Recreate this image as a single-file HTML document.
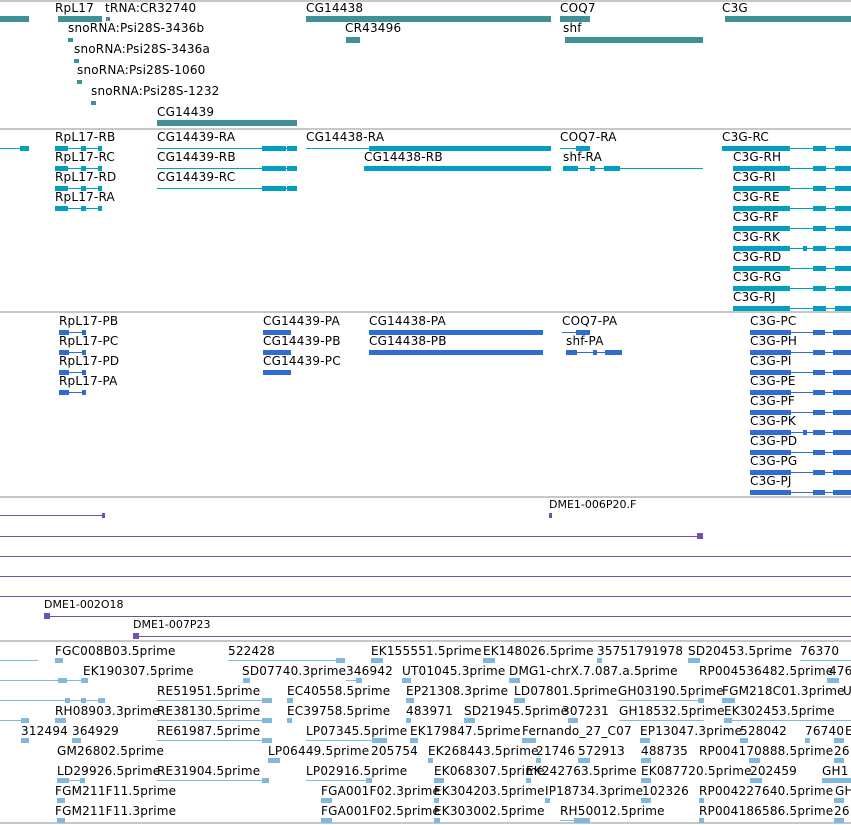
<!DOCTYPE html>
<html><head><meta charset="utf-8"><style>
html,body{margin:0;padding:0;background:#fff;width:851px;height:825px;overflow:hidden;position:relative}
div{position:absolute}
.t{font-family:"DejaVu Sans","Liberation Sans",sans-serif;font-size:12px;line-height:12px;color:#000;white-space:nowrap;letter-spacing:0.2px}
.s{left:0;width:851px;height:2px;background:#c8c8c8}
.a{background:#3f9197;height:6px}
.c{background:#00a0c0}
.p{background:#2f6bd0}
.u{background:#7050b0}
.q{background:#80b8e0}
.L{height:1px}
.B{height:5px}
</style></head><body>
<div class="s" style="top:0px"></div>
<div class="s" style="top:128px"></div>
<div class="s" style="top:311px"></div>
<div class="s" style="top:496px"></div>
<div class="s" style="top:640px"></div>
<div class="s" style="top:822px"></div>

<!-- Track 1 -->
<div class="a" style="left:0px;top:16px;width:29px"></div>
<div class="t" style="left:55px;top:2px">RpL17</div>
<div class="a" style="left:58px;top:16px;width:44px"></div>
<div class="t" style="left:105px;top:2px">tRNA:CR32740</div>
<div class="a" style="left:106px;top:17px;width:4px;height:4px"></div>
<div class="t" style="left:306px;top:2px">CG14438</div>
<div class="a" style="left:306px;top:16px;width:245px"></div>
<div class="t" style="left:560px;top:2px">COQ7</div>
<div class="a" style="left:560px;top:16px;width:30px"></div>
<div class="t" style="left:722px;top:2px">C3G</div>
<div class="a" style="left:725px;top:16px;width:126px"></div>
<div class="t" style="left:345px;top:22px">CR43496</div>
<div class="a" style="left:346px;top:37px;width:14px"></div>
<div class="t" style="left:563px;top:22px">shf</div>
<div class="a" style="left:565px;top:37px;width:138px"></div>
<div class="t" style="left:68px;top:22px">snoRNA:Psi28S-3436b</div>
<div class="a" style="left:68px;top:38px;width:5px;height:4px"></div>
<div class="t" style="left:74px;top:43px">snoRNA:Psi28S-3436a</div>
<div class="a" style="left:74px;top:59px;width:5px;height:4px"></div>
<div class="t" style="left:77px;top:64px">snoRNA:Psi28S-1060</div>
<div class="a" style="left:77px;top:80px;width:5px;height:4px"></div>
<div class="t" style="left:91px;top:85px">snoRNA:Psi28S-1232</div>
<div class="a" style="left:91px;top:101px;width:5px;height:4px"></div>
<div class="t" style="left:157px;top:106px">CG14439</div>
<div class="a" style="left:157px;top:120px;width:140px"></div>

<!-- Track 2 cyan -->
<div class="c L" style="left:0px;top:148px;width:29px"></div><div class="c B" style="left:20px;top:146px;width:9px"></div>
<div class="t" style="left:55px;top:131px">RpL17-RB</div>
<div class="t" style="left:55px;top:151px">RpL17-RC</div>
<div class="t" style="left:55px;top:171px">RpL17-RD</div>
<div class="t" style="left:55px;top:191px">RpL17-RA</div>
<div class="c L" style="left:55px;top:148px;width:47px"></div><div class="c B" style="left:55px;top:146px;width:13px"></div><div class="c B" style="left:81px;top:146px;width:5px"></div><div class="c B" style="left:98px;top:146px;width:4px"></div>
<div class="c L" style="left:55px;top:168px;width:47px"></div><div class="c B" style="left:55px;top:166px;width:13px"></div><div class="c B" style="left:81px;top:166px;width:5px"></div><div class="c B" style="left:98px;top:166px;width:4px"></div>
<div class="c L" style="left:55px;top:188px;width:47px"></div><div class="c B" style="left:55px;top:186px;width:13px"></div><div class="c B" style="left:81px;top:186px;width:5px"></div><div class="c B" style="left:98px;top:186px;width:4px"></div>
<div class="c L" style="left:55px;top:208px;width:47px"></div><div class="c B" style="left:55px;top:206px;width:13px"></div><div class="c B" style="left:81px;top:206px;width:5px"></div><div class="c B" style="left:98px;top:206px;width:4px"></div>
<div class="t" style="left:157px;top:131px">CG14439-RA</div>
<div class="t" style="left:157px;top:151px">CG14439-RB</div>
<div class="t" style="left:157px;top:171px">CG14439-RC</div>
<div class="c L" style="left:157px;top:148px;width:140px"></div><div class="c B" style="left:262px;top:146px;width:24px"></div><div class="c B" style="left:287px;top:146px;width:10px"></div>
<div class="c L" style="left:157px;top:168px;width:140px"></div><div class="c B" style="left:262px;top:166px;width:24px"></div><div class="c B" style="left:287px;top:166px;width:10px"></div>
<div class="c L" style="left:157px;top:188px;width:140px"></div><div class="c B" style="left:262px;top:186px;width:24px"></div><div class="c B" style="left:287px;top:186px;width:10px"></div>
<div class="t" style="left:306px;top:131px">CG14438-RA</div>
<div class="c L" style="left:306px;top:148px;width:70px"></div><div class="c B" style="left:369px;top:146px;width:182px"></div>
<div class="t" style="left:364px;top:151px">CG14438-RB</div>
<div class="c B" style="left:364px;top:166px;width:187px"></div>
<div class="t" style="left:560px;top:131px">COQ7-RA</div>
<div class="c L" style="left:560px;top:148px;width:30px"></div><div class="c B" style="left:576px;top:146px;width:14px"></div>
<div class="t" style="left:563px;top:151px">shf-RA</div>
<div class="c L" style="left:563px;top:168px;width:140px"></div><div class="c B" style="left:563px;top:166px;width:15px"></div><div class="c B" style="left:590px;top:166px;width:5px"></div><div class="c B" style="left:604px;top:166px;width:16px"></div>
<div class="t" style="left:722px;top:131px">C3G-RC</div>
<div class="c L" style="left:722px;top:148px;width:129px"></div><div class="c B" style="left:722px;top:146px;width:68px"></div><div class="c B" style="left:813px;top:146px;width:13px"></div><div class="c B" style="left:835px;top:146px;width:16px"></div>
<div class="t" style="left:733px;top:151px">C3G-RH</div>
<div class="t" style="left:733px;top:171px">C3G-RI</div>
<div class="t" style="left:733px;top:191px">C3G-RE</div>
<div class="t" style="left:733px;top:211px">C3G-RF</div>
<div class="t" style="left:733px;top:231px">C3G-RK</div>
<div class="t" style="left:733px;top:251px">C3G-RD</div>
<div class="t" style="left:733px;top:271px">C3G-RG</div>
<div class="t" style="left:733px;top:291px">C3G-RJ</div>
<div class="c L" style="left:733px;top:168px;width:118px"></div><div class="c B" style="left:733px;top:166px;width:57px"></div><div class="c B" style="left:813px;top:166px;width:13px"></div><div class="c B" style="left:835px;top:166px;width:16px"></div>
<div class="c L" style="left:733px;top:188px;width:118px"></div><div class="c B" style="left:733px;top:186px;width:57px"></div><div class="c B" style="left:813px;top:186px;width:13px"></div><div class="c B" style="left:835px;top:186px;width:16px"></div>
<div class="c L" style="left:733px;top:208px;width:118px"></div><div class="c B" style="left:733px;top:206px;width:57px"></div><div class="c B" style="left:813px;top:206px;width:13px"></div><div class="c B" style="left:835px;top:206px;width:16px"></div>
<div class="c L" style="left:733px;top:228px;width:118px"></div><div class="c B" style="left:733px;top:226px;width:57px"></div><div class="c B" style="left:813px;top:226px;width:13px"></div><div class="c B" style="left:835px;top:226px;width:16px"></div>
<div class="c L" style="left:733px;top:248px;width:118px"></div><div class="c B" style="left:733px;top:246px;width:57px"></div><div class="c B" style="left:803px;top:246px;width:4px"></div><div class="c B" style="left:813px;top:246px;width:13px"></div><div class="c B" style="left:835px;top:246px;width:16px"></div>
<div class="c L" style="left:733px;top:268px;width:118px"></div><div class="c B" style="left:733px;top:266px;width:57px"></div><div class="c B" style="left:813px;top:266px;width:13px"></div><div class="c B" style="left:835px;top:266px;width:16px"></div>
<div class="c L" style="left:733px;top:288px;width:118px"></div><div class="c B" style="left:733px;top:286px;width:57px"></div><div class="c B" style="left:813px;top:286px;width:13px"></div><div class="c B" style="left:835px;top:286px;width:16px"></div>
<div class="c L" style="left:733px;top:308px;width:118px"></div><div class="c B" style="left:733px;top:306px;width:57px"></div><div class="c B" style="left:813px;top:306px;width:13px"></div><div class="c B" style="left:835px;top:306px;width:16px"></div>

<!-- Track 3 blue -->
<div class="t" style="left:59px;top:315px">RpL17-PB</div>
<div class="t" style="left:59px;top:335px">RpL17-PC</div>
<div class="t" style="left:59px;top:355px">RpL17-PD</div>
<div class="t" style="left:59px;top:375px">RpL17-PA</div>
<div class="p L" style="left:59px;top:332px;width:27px"></div><div class="p B" style="left:59px;top:330px;width:10px"></div><div class="p B" style="left:82px;top:330px;width:4px"></div>
<div class="p L" style="left:59px;top:352px;width:27px"></div><div class="p B" style="left:59px;top:350px;width:10px"></div><div class="p B" style="left:82px;top:350px;width:4px"></div>
<div class="p L" style="left:59px;top:372px;width:27px"></div><div class="p B" style="left:59px;top:370px;width:10px"></div><div class="p B" style="left:82px;top:370px;width:4px"></div>
<div class="p L" style="left:59px;top:392px;width:27px"></div><div class="p B" style="left:59px;top:390px;width:10px"></div><div class="p B" style="left:82px;top:390px;width:4px"></div>
<div class="t" style="left:263px;top:315px">CG14439-PA</div>
<div class="t" style="left:263px;top:335px">CG14439-PB</div>
<div class="t" style="left:263px;top:355px">CG14439-PC</div>
<div class="p B" style="left:263px;top:330px;width:28px"></div>
<div class="p B" style="left:263px;top:350px;width:28px"></div>
<div class="p B" style="left:263px;top:370px;width:28px"></div>
<div class="t" style="left:369px;top:315px">CG14438-PA</div>
<div class="t" style="left:369px;top:335px">CG14438-PB</div>
<div class="p B" style="left:369px;top:330px;width:174px"></div>
<div class="p B" style="left:369px;top:350px;width:174px"></div>
<div class="t" style="left:562px;top:315px">COQ7-PA</div>
<div class="p L" style="left:562px;top:332px;width:28px"></div><div class="p B" style="left:576px;top:330px;width:14px"></div>
<div class="t" style="left:566px;top:335px">shf-PA</div>
<div class="p L" style="left:566px;top:352px;width:56px"></div><div class="p B" style="left:566px;top:350px;width:11px"></div><div class="p B" style="left:593px;top:350px;width:4px"></div><div class="p B" style="left:605px;top:350px;width:17px"></div>
<div class="t" style="left:750px;top:315px">C3G-PC</div>
<div class="t" style="left:750px;top:335px">C3G-PH</div>
<div class="t" style="left:750px;top:355px">C3G-PI</div>
<div class="t" style="left:750px;top:375px">C3G-PE</div>
<div class="t" style="left:750px;top:395px">C3G-PF</div>
<div class="t" style="left:750px;top:415px">C3G-PK</div>
<div class="t" style="left:750px;top:435px">C3G-PD</div>
<div class="t" style="left:750px;top:455px">C3G-PG</div>
<div class="t" style="left:750px;top:475px">C3G-PJ</div>
<div class="p L" style="left:750px;top:332px;width:101px"></div><div class="p B" style="left:750px;top:330px;width:41px"></div><div class="p B" style="left:813px;top:330px;width:12px"></div><div class="p B" style="left:833px;top:330px;width:18px"></div>
<div class="p L" style="left:750px;top:352px;width:101px"></div><div class="p B" style="left:750px;top:350px;width:41px"></div><div class="p B" style="left:813px;top:350px;width:12px"></div><div class="p B" style="left:833px;top:350px;width:18px"></div>
<div class="p L" style="left:750px;top:372px;width:101px"></div><div class="p B" style="left:750px;top:370px;width:41px"></div><div class="p B" style="left:813px;top:370px;width:12px"></div><div class="p B" style="left:833px;top:370px;width:18px"></div>
<div class="p L" style="left:750px;top:392px;width:101px"></div><div class="p B" style="left:750px;top:390px;width:41px"></div><div class="p B" style="left:813px;top:390px;width:12px"></div><div class="p B" style="left:833px;top:390px;width:18px"></div>
<div class="p L" style="left:750px;top:412px;width:101px"></div><div class="p B" style="left:750px;top:410px;width:41px"></div><div class="p B" style="left:813px;top:410px;width:12px"></div><div class="p B" style="left:833px;top:410px;width:18px"></div>
<div class="p L" style="left:750px;top:432px;width:101px"></div><div class="p B" style="left:750px;top:430px;width:41px"></div><div class="p B" style="left:803px;top:430px;width:4px"></div><div class="p B" style="left:813px;top:430px;width:12px"></div><div class="p B" style="left:833px;top:430px;width:18px"></div>
<div class="p L" style="left:750px;top:452px;width:101px"></div><div class="p B" style="left:750px;top:450px;width:41px"></div><div class="p B" style="left:813px;top:450px;width:12px"></div><div class="p B" style="left:833px;top:450px;width:18px"></div>
<div class="p L" style="left:750px;top:472px;width:101px"></div><div class="p B" style="left:750px;top:470px;width:41px"></div><div class="p B" style="left:813px;top:470px;width:12px"></div><div class="p B" style="left:833px;top:470px;width:18px"></div>
<div class="p L" style="left:750px;top:492px;width:101px"></div><div class="p B" style="left:750px;top:490px;width:41px"></div><div class="p B" style="left:813px;top:490px;width:12px"></div><div class="p B" style="left:833px;top:490px;width:18px"></div>

<!-- Track 4 purple -->
<div class="u L" style="left:0px;top:515px;width:105px"></div><div class="u" style="left:102px;top:513px;width:3px;height:5px"></div>
<div class="t" style="left:549px;top:499px;font-size:11px;letter-spacing:0">DME1-006P20.F</div>
<div class="u" style="left:549px;top:513px;width:3px;height:5px"></div>
<div class="u L" style="left:0px;top:536px;width:703px"></div><div class="u" style="left:697px;top:533px;width:6px;height:6px"></div>
<div class="u L" style="left:0px;top:556px;width:851px"></div>
<div class="u L" style="left:0px;top:576px;width:851px"></div>
<div class="u L" style="left:0px;top:596px;width:851px"></div>
<div class="t" style="left:44px;top:599px;font-size:11px;letter-spacing:0">DME1-002O18</div>
<div class="u L" style="left:44px;top:616px;width:807px"></div><div class="u" style="left:44px;top:613px;width:6px;height:6px"></div>
<div class="t" style="left:133px;top:619px;font-size:11px;letter-spacing:0">DME1-007P23</div>
<div class="u L" style="left:133px;top:636px;width:718px"></div><div class="u" style="left:133px;top:633px;width:6px;height:6px"></div>

<!-- Track 5 light blue -->
<div class="t" style="left:55px;top:645px">FGC008B03.5prime</div>
<div class="t" style="left:228px;top:645px">522428</div>
<div class="t" style="left:371px;top:645px">EK155551.5prime</div>
<div class="t" style="left:483px;top:645px">EK148026.5prime</div>
<div class="t" style="left:597px;top:645px">35751791978</div>
<div class="t" style="left:688px;top:645px">SD20453.5prime</div>
<div class="t" style="left:800px;top:645px">76370</div>
<div class="q L" style="left:0px;top:660px;width:38px"></div><div class="q B" style="left:55px;top:658px;width:8px"></div><div class="q L" style="left:228px;top:660px;width:117px"></div><div class="q B" style="left:336px;top:658px;width:9px"></div><div class="q B" style="left:371px;top:658px;width:12px"></div><div class="q B" style="left:483px;top:658px;width:12px"></div><div class="q B" style="left:597px;top:658px;width:5px"></div><div class="q B" style="left:688px;top:658px;width:12px"></div><div class="q L" style="left:800px;top:660px;width:51px"></div>

<div class="t" style="left:83px;top:665px">EK190307.5prime</div>
<div class="t" style="left:242px;top:665px">SD07740.3prime</div>
<div class="t" style="left:346px;top:665px">346942</div>
<div class="t" style="left:402px;top:665px">UT01045.3prime</div>
<div class="t" style="left:509px;top:665px">DMG1-chrX.7.087.a.5prime</div>
<div class="t" style="left:699px;top:665px">RP004536482.5prime</div>
<div class="t" style="left:829px;top:665px">476</div>
<div class="q L" style="left:0px;top:680px;width:88px"></div><div class="q B" style="left:58px;top:678px;width:9px"></div><div class="q B" style="left:81px;top:678px;width:7px"></div><div class="q B" style="left:243px;top:678px;width:7px"></div><div class="q L" style="left:346px;top:680px;width:16px"></div><div class="q B" style="left:356px;top:678px;width:6px"></div><div class="q B" style="left:402px;top:678px;width:9px"></div><div class="q B" style="left:509px;top:678px;width:11px"></div><div class="q B" style="left:827px;top:678px;width:12px"></div>

<div class="t" style="left:157px;top:685px">RE51951.5prime</div>
<div class="t" style="left:287px;top:685px">EC40558.5prime</div>
<div class="t" style="left:406px;top:685px">EP21308.3prime</div>
<div class="t" style="left:514px;top:685px">LD07801.5prime</div>
<div class="t" style="left:618px;top:685px">GH03190.5prime</div>
<div class="t" style="left:722px;top:685px">FGM218C01.3prime</div>
<div class="t" style="left:843px;top:685px">U</div>
<div class="q L" style="left:0px;top:700px;width:105px"></div><div class="q B" style="left:65px;top:698px;width:5px"></div><div class="q B" style="left:81px;top:698px;width:5px"></div><div class="q B" style="left:98px;top:698px;width:7px"></div><div class="q L" style="left:157px;top:700px;width:115px"></div><div class="q B" style="left:262px;top:698px;width:10px"></div><div class="q B" style="left:287px;top:698px;width:6px"></div><div class="q B" style="left:406px;top:698px;width:8px"></div><div class="q B" style="left:514px;top:698px;width:11px"></div><div class="q L" style="left:618px;top:700px;width:86px"></div><div class="q B" style="left:698px;top:698px;width:6px"></div><div class="q B" style="left:722px;top:698px;width:13px"></div>

<div class="t" style="left:55px;top:705px">RH08903.3prime</div>
<div class="t" style="left:157px;top:705px">RE38130.5prime</div>
<div class="t" style="left:287px;top:705px">EC39758.5prime</div>
<div class="t" style="left:406px;top:705px">483971</div>
<div class="t" style="left:464px;top:705px">SD21945.5prime</div>
<div class="t" style="left:562px;top:705px">307231</div>
<div class="t" style="left:619px;top:705px">GH18532.5prime</div>
<div class="t" style="left:724px;top:705px">EK302453.5prime</div>
<div class="q L" style="left:0px;top:720px;width:28px"></div><div class="q B" style="left:21px;top:718px;width:8px"></div><div class="q B" style="left:55px;top:718px;width:11px"></div><div class="q L" style="left:157px;top:720px;width:115px"></div><div class="q B" style="left:262px;top:718px;width:10px"></div><div class="q B" style="left:287px;top:718px;width:5px"></div><div class="q B" style="left:406px;top:718px;width:5px"></div><div class="q B" style="left:464px;top:718px;width:11px"></div><div class="q B" style="left:568px;top:718px;width:10px"></div><div class="q L" style="left:619px;top:720px;width:85px"></div><div class="q B" style="left:724px;top:718px;width:8px"></div><div class="q L" style="left:724px;top:720px;width:127px"></div>

<div class="t" style="left:21px;top:725px">312494</div>
<div class="t" style="left:72px;top:725px">364929</div>
<div class="t" style="left:157px;top:725px">RE61987.5prime</div>
<div class="t" style="left:306px;top:725px">LP07345.5prime</div>
<div class="t" style="left:410px;top:725px">EK179847.5prime</div>
<div class="t" style="left:522px;top:725px">Fernando_27_C07</div>
<div class="t" style="left:640px;top:725px">EP13047.3prime</div>
<div class="t" style="left:740px;top:725px">528042</div>
<div class="t" style="left:805px;top:725px">76740</div>
<div class="t" style="left:845px;top:725px">E</div>
<div class="q B" style="left:21px;top:738px;width:8px"></div><div class="q B" style="left:72px;top:738px;width:9px"></div><div class="q L" style="left:157px;top:740px;width:115px"></div><div class="q B" style="left:262px;top:738px;width:10px"></div><div class="q L" style="left:306px;top:740px;width:66px"></div><div class="q B" style="left:372px;top:738px;width:15px"></div><div class="q B" style="left:410px;top:738px;width:8px"></div><div class="q B" style="left:522px;top:738px;width:14px"></div><div class="q B" style="left:640px;top:738px;width:10px"></div><div class="q B" style="left:740px;top:738px;width:8px"></div><div class="q B" style="left:805px;top:738px;width:5px"></div><div class="q B" style="left:834px;top:738px;width:10px"></div>

<div class="t" style="left:57px;top:745px">GM26802.5prime</div>
<div class="t" style="left:268px;top:745px">LP06449.5prime</div>
<div class="t" style="left:371px;top:745px">205754</div>
<div class="t" style="left:428px;top:745px">EK268443.5prime</div>
<div class="t" style="left:536px;top:745px">21746</div>
<div class="t" style="left:578px;top:745px">572913</div>
<div class="t" style="left:641px;top:745px">488735</div>
<div class="t" style="left:699px;top:745px">RP004170888.5prime</div>
<div class="t" style="left:834px;top:745px">26</div>
<div class="q B" style="left:268px;top:758px;width:12px"></div><div class="q B" style="left:428px;top:758px;width:5px"></div><div class="q B" style="left:536px;top:758px;width:5px"></div><div class="q B" style="left:578px;top:758px;width:12px"></div><div class="q B" style="left:641px;top:758px;width:10px"></div><div class="q B" style="left:749px;top:758px;width:11px"></div><div class="q B" style="left:834px;top:758px;width:10px"></div>

<div class="t" style="left:57px;top:765px">LD29926.5prime</div>
<div class="t" style="left:157px;top:765px">RE31904.5prime</div>
<div class="t" style="left:306px;top:765px">LP02916.5prime</div>
<div class="t" style="left:434px;top:765px">EK068307.5prime</div>
<div class="t" style="left:526px;top:765px">EK242763.5prime</div>
<div class="t" style="left:641px;top:765px">EK087720.5prime</div>
<div class="t" style="left:750px;top:765px">202459</div>
<div class="t" style="left:822px;top:765px">GH1</div>
<div class="q L" style="left:57px;top:780px;width:28px"></div><div class="q B" style="left:57px;top:778px;width:12px"></div><div class="q B" style="left:80px;top:778px;width:5px"></div><div class="q L" style="left:157px;top:780px;width:112px"></div><div class="q B" style="left:262px;top:778px;width:7px"></div><div class="q L" style="left:306px;top:780px;width:66px"></div><div class="q B" style="left:366px;top:778px;width:6px"></div><div class="q B" style="left:434px;top:778px;width:10px"></div><div class="q B" style="left:526px;top:778px;width:5px"></div><div class="q B" style="left:641px;top:778px;width:10px"></div><div class="q B" style="left:750px;top:778px;width:12px"></div><div class="q B" style="left:822px;top:778px;width:29px"></div>

<div class="t" style="left:55px;top:785px">FGM211F11.5prime</div>
<div class="t" style="left:321px;top:785px">FGA001F02.3prime</div>
<div class="t" style="left:434px;top:785px">EK304203.5prime</div>
<div class="t" style="left:545px;top:785px">IP18734.3prime</div>
<div class="t" style="left:642px;top:785px">102326</div>
<div class="t" style="left:699px;top:785px">RP004227640.5prime</div>
<div class="t" style="left:835px;top:785px">GH</div>
<div class="q B" style="left:57px;top:798px;width:8px"></div><div class="q B" style="left:321px;top:798px;width:11px"></div><div class="q B" style="left:434px;top:798px;width:5px"></div><div class="q B" style="left:545px;top:798px;width:5px"></div><div class="q B" style="left:641px;top:798px;width:10px"></div><div class="q B" style="left:699px;top:798px;width:5px"></div><div class="q B" style="left:834px;top:798px;width:10px"></div>

<div class="t" style="left:55px;top:805px">FGM211F11.3prime</div>
<div class="t" style="left:321px;top:805px">FGA001F02.5prime</div>
<div class="t" style="left:434px;top:805px">EK303002.5prime</div>
<div class="t" style="left:560px;top:805px">RH50012.5prime</div>
<div class="t" style="left:699px;top:805px">RP004186586.5prime</div>
<div class="t" style="left:834px;top:805px">26</div>
<div class="q B" style="left:57px;top:818px;width:8px"></div><div class="q B" style="left:321px;top:818px;width:11px"></div><div class="q B" style="left:434px;top:818px;width:6px"></div><div class="q L" style="left:560px;top:820px;width:30px"></div><div class="q B" style="left:574px;top:818px;width:16px"></div><div class="q B" style="left:699px;top:818px;width:5px"></div><div class="q B" style="left:834px;top:818px;width:10px"></div>
</body></html>
